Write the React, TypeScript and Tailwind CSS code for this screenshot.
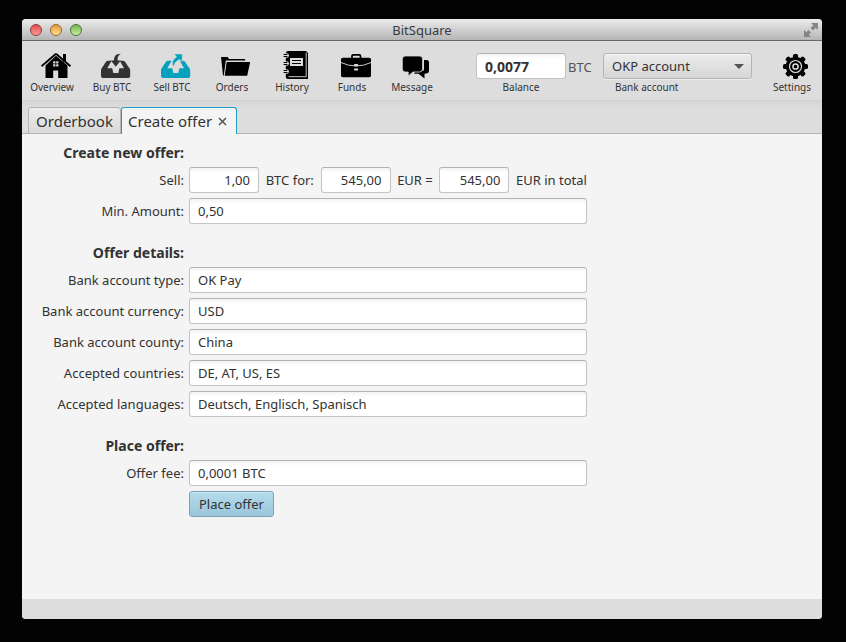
import type { ReactNode } from 'react';
import clsx from 'clsx';

const fieldStyle =
  'h-[26px] min-w-0 rounded-[3px] border border-[#c4c4c4] border-t-[#b2b2b2] bg-white bg-linear-to-b from-[#f3f3f3] to-white to-20% px-2 text-[#323232] outline-none';

const ink = '#000000';
const paper = '#dddddd';

function Icon({ children }: { children: ReactNode }) {
  return (
    <svg viewBox="0 0 32 26" className="h-[26px] w-8 overflow-visible" aria-hidden="true">
      {children}
    </svg>
  );
}

function HomeIcon() {
  return (
    <Icon>
      <path d="M23 1h3v8h-3z" fill={ink} />
      <path d="M16 0.8L1.5 13.2" stroke={ink} strokeWidth="1.8" />
      <path d="M16 0.8L30.5 13.2" stroke={ink} strokeWidth="1.8" />
      <path d="M16 2.8L27.5 12.6V25H18.2V17.5h-5V25H5.5V12.6Z" fill={ink} />
      <path d="M13.2 8.2h2.2v2.2h-2.2zM16.2 8.2h2.2v2.2h-2.2zM13.2 11.2h2.2v2.2h-2.2zM16.2 11.2h2.2v2.2h-2.2z" fill={paper} />
    </Icon>
  );
}

const trayPath =
  'M6 8.8Q6.6 7.7 8 7.7H11.6L7.3 15.2H12.2L13.3 20H18.3L19.4 15.2H24L19.8 7.7H23Q24.4 7.7 25 8.8L29.6 15.6Q30.2 16.5 30.2 18V23Q30.2 25 28.2 25H3Q1 25 1 23V18Q1 16.5 1.5 15.6Z';

function BuyIcon() {
  return (
    <Icon>
      <path d={trayPath} fill="#333333" />
      <path d="M20.8 0.8C16 0.6 14 3.4 14 7.4H10.8L15.8 13.8L20.8 7.4H17.6C17.4 4.2 18.2 2.2 20.8 0.8Z" fill="#333333" />
    </Icon>
  );
}

function SellIcon() {
  return (
    <Icon>
      <path d={trayPath} fill="#05a1bd" />
      <path d="M13.6 14C11.4 10.5 12.4 6.5 16.6 4.1L14.2 1H22.2V8.8L19.8 6.6C16 8 14 10.5 13.6 14Z" fill="#05a1bd" stroke={paper} strokeWidth="0.5" />
    </Icon>
  );
}

function FolderIcon() {
  return (
    <Icon>
      <path d="M1 4h6.800l1.200 2H24.800l0.700 1.600H5.800L3.800 22.500H3Z" fill={ink} />
      <path d="M7.200 9H29.500Q30.200 9 30 9.800L27.200 22.800H4.700L6.500 9.800Q6.600 9 7.200 9Z" fill={ink} />
    </Icon>
  );
}

function NotebookIcon() {
  return (
    <Icon>
      <path d="M8 -2H26L28 0V26H8Q5.8 26 5.8 23.5V0.5Q5.8 -2 8 -2Z" fill={ink} />
      <path d="M26.2 -0.5V23.7H8.5" fill="none" stroke={paper} strokeWidth="0.9" />
      <path d="M10 5H23V13H10Z" fill={paper} />
      <path d="M12 7.5H21M12 10.5H21" stroke={ink} strokeWidth="1" />
      {[2.5, 10.5, 18.5].map((y) => (
        <g key={y}>
          <circle cx="6.6" cy={y} r="2.3" fill={paper} />
          <path d={`M4 ${y - 1}H7M4 ${y + 1}H7`} stroke={ink} strokeWidth="1" strokeLinecap="round" />
        </g>
      ))}
    </Icon>
  );
}

function BriefcaseIcon() {
  return (
    <Icon>
      <path d="M12 5V3Q12 1.8 13.2 1.8H19.3Q20.5 1.8 20.5 3V5" fill="none" stroke={ink} strokeWidth="1.7" />
      <rect x="1" y="4.8" width="30" height="19.4" rx="1.8" fill={ink} />
      <path d="M1 9.5Q16 16.5 31 9.5" fill="none" stroke={paper} strokeWidth="0.9" />
      <rect x="14" y="11" width="4.2" height="2.2" rx="0.8" fill={paper} />
      <rect x="14" y="15.4" width="4.2" height="2.2" rx="0.8" fill={paper} />
    </Icon>
  );
}

function ChatIcon() {
  return (
    <Icon>
      <path d="M24 7H26.5Q29 7 29 9.5V17.5Q29 20.3 26 20.5L24.5 20.7V25.5L18.500 20.8H14.500V18H22.500Q24 18 24 16Z" fill={ink} />
      <path d="M5.500 3H19.500Q22.600 3 22.600 6V15.800Q22.600 19 19.500 19H13L8.200 23V19H5.500Q2.300 19 2.300 15.800V6Q2.300 3 5.500 3Z" fill={ink} stroke={paper} strokeWidth="0.8" />
    </Icon>
  );
}

function GearIcon() {
  return (
    <Icon>
      {[0, 45, 90, 135, 180, 225, 270, 315].map((a) => (
        <rect key={a} x="13" y="1" width="5" height="6" rx="1.6" fill={ink} transform={`rotate(${a} 15.5 13.5)`} />
      ))}
      <circle cx="15.5" cy="13.5" r="9.8" fill={ink} />
      <circle cx="15.5" cy="13.5" r="6" fill="none" stroke={paper} strokeWidth="1.2" />
      <circle cx="15.5" cy="13.5" r="2.6" fill="none" stroke={paper} strokeWidth="1.5" />
    </Icon>
  );
}

function ToolButton({ label, children }: { label: string; children: ReactNode }) {
  return (
    <button type="button" className="flex w-[60px] shrink-0 flex-col items-center gap-0.5 whitespace-nowrap">
      <span className="pl-2">{children}</span>
      <span className="text-[10px] leading-3">{label}</span>
    </button>
  );
}

function TitleBar() {
  return (
    <header className="flex h-[22px] items-center justify-between border-b border-[#686868] bg-linear-to-b from-[#ececec] to-[#b5b5b5] pr-1 pl-2">
      <div className="flex w-14 gap-2">
        <button type="button" aria-label="Close" className="size-3 rounded-full border border-[#8d3a38] bg-linear-to-b from-[#e0474c] to-[#ff9a96]" />
        <button type="button" aria-label="Minimize" className="size-3 rounded-full border border-[#92672c] bg-linear-to-b from-[#e49b39] to-[#ffe08c]" />
        <button type="button" aria-label="Zoom" className="size-3 rounded-full border border-[#4d7537] bg-linear-to-b from-[#72b350] to-[#c8f0a0]" />
      </div>
      <h1 className="text-[13px] leading-4 text-[#3a3a3a]">BitSquare</h1>
      <button type="button" aria-label="Full screen" className="flex w-[60px] justify-end">
        <svg viewBox="0 0 14 14" className="size-[14px]" aria-hidden="true">
          <path d="M7 0h7v7l-2.300-2.300L9 7.400 6.600 5 9.300 2.300zM0 7l2.300 2.300L4.600 7 7 9.400 4.700 11.700 7 14H0z" fill="#858585" />
        </svg>
      </button>
    </header>
  );
}

function Toolbar() {
  return (
    <div className="flex h-[60px] justify-between border-b border-[#d2d2d2] bg-[#dddddd] pt-3">
      <nav className="flex">
        <ToolButton label="Overview"><HomeIcon /></ToolButton>
        <ToolButton label="Buy BTC"><BuyIcon /></ToolButton>
        <ToolButton label="Sell BTC"><SellIcon /></ToolButton>
        <ToolButton label="Orders"><FolderIcon /></ToolButton>
        <ToolButton label="History"><NotebookIcon /></ToolButton>
        <ToolButton label="Funds"><BriefcaseIcon /></ToolButton>
        <ToolButton label="Message"><ChatIcon /></ToolButton>
      </nav>
      <div className="flex">
        <div className="flex w-[90px] flex-col items-center gap-0.5">
          <input id="balance" readOnly defaultValue="0,0077" className={clsx(fieldStyle, 'w-full text-[14px] font-bold')} />
          <label htmlFor="balance" className="text-[10px] leading-3">Balance</label>
        </div>
        <span className="w-[37px] pl-0.5 text-[13px] leading-7 text-[#555555]">BTC</span>
        <div className="flex w-[149px] flex-col gap-0.5">
          <div className="grid items-center">
            <select
              id="bank"
              className="col-start-1 row-start-1 h-[26px] w-full appearance-none rounded-[3px] border border-[#b4b4b4] bg-linear-to-b from-[#ececec] to-[#d6d6d6] px-2 pt-0.5 text-[13px] text-[#323232] shadow-[0_1px_0_#efefef,inset_0_1px_0_#f8f8f8] outline-none"
            >
              <option>OKP account</option>
            </select>
            <svg viewBox="0 0 10 5" className="pointer-events-none col-start-1 row-start-1 mr-2 h-[5px] w-[10px] justify-self-end" aria-hidden="true">
              <path d="M0 0h10L5 5z" fill="#555555" />
            </svg>
          </div>
          <label htmlFor="bank" className="pl-3 text-[10px] leading-3">Bank account</label>
        </div>
        <div className="pl-[10px]">
          <ToolButton label="Settings"><GearIcon /></ToolButton>
        </div>
      </div>
    </div>
  );
}

function Tabs() {
  return (
    <div role="tablist" className="flex h-[33px] items-end bg-linear-to-b from-[#d6d6d6] to-[#dddddd] to-20% pl-1.5 text-[15px] leading-5 whitespace-nowrap shadow-[inset_0_-1px_0_#b4b4b4]">
      <button type="button" role="tab" aria-selected="false" className="h-[27px] w-[93px] rounded-t-[3px] border border-[#b4b4b4] bg-linear-to-b from-[#ececec] to-[#dadada]">
        Orderbook
      </button>
      <div className="flex h-[27px] w-[116px] items-center gap-1.5 rounded-t-[3px] border border-b-0 border-[#1a9fc6] bg-[#f4f4f4] pl-1.5">
        <button type="button" role="tab" aria-selected="true">Create offer</button>
        <button type="button" aria-label="Close tab">
          <svg viewBox="0 0 9 9" className="size-[9px]" aria-hidden="true">
            <path d="M1 1l7 7M8 1L1 8" stroke="#555555" strokeWidth="1.5" />
          </svg>
        </button>
      </div>
    </div>
  );
}

function Heading({ children, first }: { children: string; first?: boolean }) {
  return (
    <h2 className={clsx('col-start-1 justify-self-end text-[14px] leading-[18px] font-bold', !first && 'mt-[15px]')}>
      {children}
    </h2>
  );
}

function Field({ id, label, value }: { id: string; label: string; value: string }) {
  return (
    <>
      <label htmlFor={id} className="col-start-1 justify-self-end">{label}</label>
      <input id={id} defaultValue={value} className={clsx(fieldStyle, 'w-full')} />
    </>
  );
}

function OfferForm() {
  const amountStyle = clsx(fieldStyle, 'w-[70px] text-right');
  return (
    <form className="grid grid-cols-[152px_minmax(0,398px)] items-center gap-[5px] pt-[10px] pr-4 pl-[10px] text-[13px] leading-[18px] whitespace-nowrap">
      <Heading first>Create new offer:</Heading>
      <label htmlFor="amount" className="col-start-1 justify-self-end">Sell:</label>
      <div className="flex items-center justify-between">
        <input id="amount" defaultValue="1,00" className={amountStyle} />
        <label htmlFor="price">BTC for:</label>
        <input id="price" defaultValue="545,00" className={amountStyle} />
        <label htmlFor="total">EUR =</label>
        <input id="total" defaultValue="545,00" className={amountStyle} />
        <span>EUR in total</span>
      </div>
      <Field id="min" label="Min. Amount:" value="0,50" />

      <Heading>Offer details:</Heading>
      <Field id="type" label="Bank account type:" value="OK Pay" />
      <Field id="currency" label="Bank account currency:" value="USD" />
      <Field id="county" label="Bank account county:" value="China" />
      <Field id="countries" label="Accepted countries:" value="DE, AT, US, ES" />
      <Field id="languages" label="Accepted languages:" value="Deutsch, Englisch, Spanisch" />

      <Heading>Place offer:</Heading>
      <Field id="fee" label="Offer fee:" value="0,0001 BTC" />
      <button
        type="submit"
        className="col-start-2 h-[26px] min-w-[85px] justify-self-start rounded-[3px] border border-[#7ba3b6] bg-linear-to-b from-[#b4dcec] to-[#9bc5d9] px-2 shadow-[inset_0_1px_0_#c6e6f2]"
      >
        Place offer
      </button>
    </form>
  );
}

export default function App() {
  return (
    <div className="flex min-h-screen flex-col bg-[#020302] pt-[19px] pr-6 pb-[23px] pl-[22px] font-['Noto_Sans',sans-serif] text-[#323232]">
      <div className="flex flex-1 flex-col overflow-hidden rounded-[4px] bg-[#f4f4f4]">
        <TitleBar />
        <Toolbar />
        <Tabs />
        <main className="flex-1">
          <OfferForm />
        </main>
        <footer className="h-5 bg-[#dddddd]" />
      </div>
    </div>
  );
}
